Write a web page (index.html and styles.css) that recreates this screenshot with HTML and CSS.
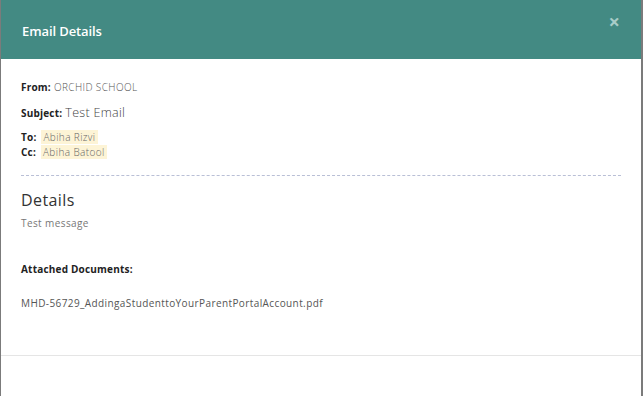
FILE: index.html
```html
<!DOCTYPE html>
<html lang="en">
<head>
    <meta charset="UTF-8">
    <meta name="viewport" content="width=device-width, initial-scale=1.0">
    <title>Email Details</title>
    <link rel="stylesheet" href="styles.css">
</head>
<body>
    <div class="modal">
        <div class="modal-header">
            <h4 class="modal-title">Email Details</h4>
            <span class="close">&times;</span>
        </div>
        <div class="modal-body">
            <p class="line"><b>From:</b> ORCHID SCHOOL</p>
            <p class="line subject"><b>Subject:</b> <span class="subject-text">Test Email</span></p>
            <div class="recipients">
                <p class="line"><b>To:</b> <span class="tag">Abiha Rizvi</span></p>
                <p class="line"><b>Cc:</b> <span class="tag">Abiha Batool</span></p>
            </div>
            <hr class="dashed">
            <h3 class="details-title">Details</h3>
            <p class="message">Test message</p>
            <p class="line attach-title"><b>Attached Documents:</b></p>
            <p class="file">MHD-56729_AddingaStudenttoYourParentPortalAccount.pdf</p>
        </div>
        <div class="modal-footer"></div>
    </div>
</body>
</html>
```

FILE: styles.css
```css
body {
    margin: 0;
    background-color: #7b7b7b;
    font-family: "Open Sans", sans-serif;
    color: #333;
    height: 396px;
    overflow: hidden;
}
.modal {
    margin: 0 2px 0 1px;
    background: white;
    height: 396px;
}
.modal-header {
    background: #438a83;
    height: 59px;
    display: flex;
    align-items: center;
    justify-content: space-between;
    padding: 0 21px 0 21px;
}
.modal-title {
    margin: 0;
    padding-top: 2px;
    color: white;
    font-size: 13px;
    font-weight: 600;
    letter-spacing: -0.1px;
}
.close {
    color: #a8ccc8;
    font-size: 20px;
    font-weight: bold;
    margin-top: -17px;
}
.modal-body {
    padding: 21px 20px 0 20px;
    height: 275px;
    letter-spacing: 0.4px;
}
.line {
    margin: 0;
    font-size: 10px;
    color: #555;
    font-weight: 300;
}
.line b {
    color: #222;
    font-weight: 700;
    letter-spacing: 0.2px;
}
.subject {
    margin-top: 10px;
}
.subject-text {
    font-size: 12.5px;
    color: #444;
    letter-spacing: 0.3px;
}
.recipients {
    margin-top: 9px;
    display: flex;
    flex-direction: column;
    gap: 1px;
}
.tag {
    background: #fdf4d6;
    color: #666;
    padding: 0 2px;
    margin-left: 2px;
}
.dashed {
    border: 0;
    border-top: 1px dashed #b9bfd6;
    margin: 16px 0 0 0;
}
.details-title {
    margin: 13px 0 0 0;
    font-size: 16px;
    font-weight: 400;
    color: #333;
}
.message {
    margin: 5px 0 0 0;
    font-size: 10px;
    color: #777;
}
.attach-title {
    margin-top: 32px;
}
.file {
    margin: 20px 0 0 0;
    font-size: 10px;
    color: #555;
}
.modal-footer {
    border-top: 1px solid #e5e5e5;
}
```
